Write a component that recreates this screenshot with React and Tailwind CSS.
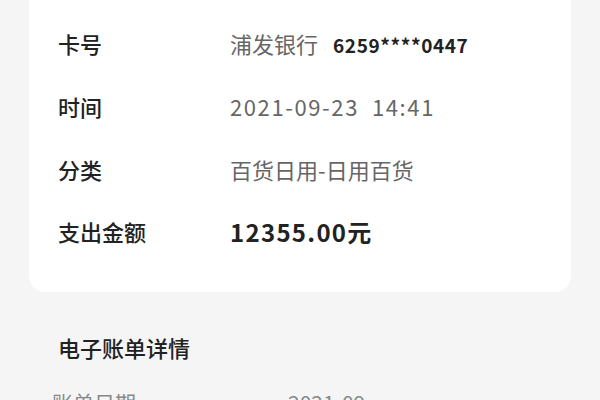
import React from 'react';

const rows = [
  { label: '交易对象', value: <span className="text-[#666]">上海浦东发展银行信用卡中心</span> },
  {
    label: '卡号',
    value: (
      <span className="flex items-baseline gap-[15px]">
        <span className="text-[#666]">浦发银行</span>
        <span className="text-[19px] font-bold tracking-[0.6px] text-[#222]">6259****0447</span>
      </span>
    ),
  },
  { label: '时间', value: <span className="tracking-[1.6px] text-[#666]">2021-09-23&nbsp;&nbsp;14:41</span> },
  { label: '分类', value: <span className="text-[#666]">百货日用-日用百货</span> },
  { label: '支出金额', value: <span className="text-[24px] font-bold tracking-[1.3px] text-[#222]">12355.00元</span> },
];

export default function App() {
  return (
    <div
      className="w-[600px] h-[400px] overflow-hidden bg-[#f5f5f5]"
      style={{ fontFamily: '"Noto Sans CJK SC", "Noto Sans", sans-serif' }}
    >
      <div className="mx-[29px] -mt-[50px] rounded-b-[16px] bg-white pb-[29px]">
        {rows.map((row) => (
          <div key={row.label} className="flex h-[62.6px] items-center text-[22px]">
            <div className="w-[201px] pl-[29px] font-medium text-[#222]">{row.label}</div>
            <div>{row.value}</div>
          </div>
        ))}
      </div>
      <div className="mt-[39px] pl-[58px] text-[22px] font-medium text-[#222]">电子账单详情</div>
      <div className="mt-[23px] flex text-[21px] text-[#888]">
        <div className="w-[288px] pl-[52px]">账单日期</div>
        <div>2021-09</div>
      </div>
    </div>
  );
}
